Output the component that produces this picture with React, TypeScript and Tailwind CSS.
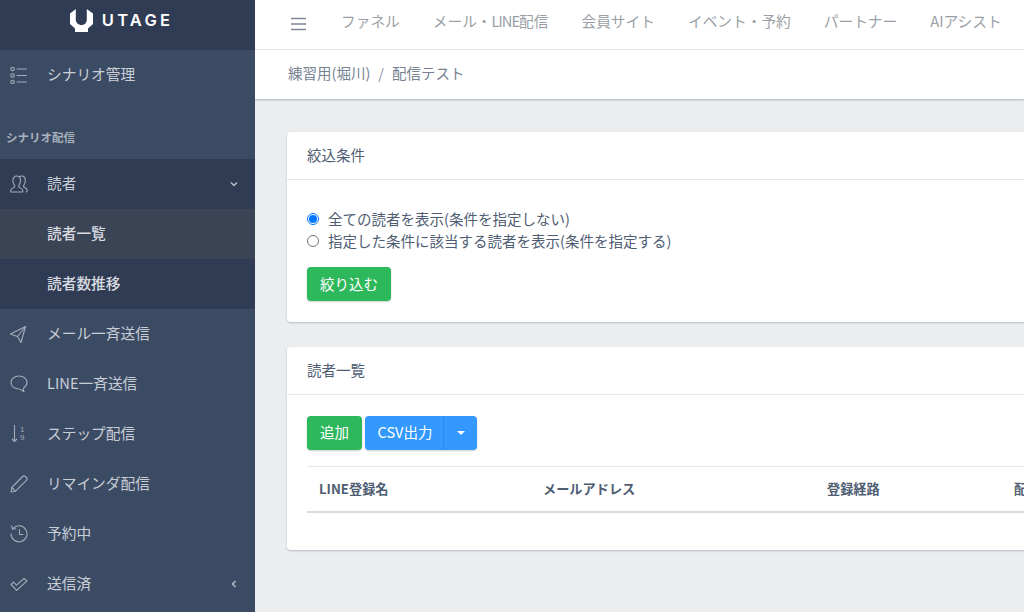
import React from "react";

const stroke = { fill: "none", stroke: "currentColor", strokeWidth: 1.1, strokeLinecap: "round", strokeLinejoin: "round" } as const;

const ListIcon = () => (
  <svg width="17" height="17" viewBox="0 0 17 17" {...stroke}>
    <circle cx="2.500" cy="2" r="1.700" /><circle cx="2.500" cy="8.500" r="1.700" /><circle cx="2.500" cy="15" r="1.700" />
    <path d="M7 2h9.500M7 8.500h9.500M7 15h9.500" />
  </svg>
);
const UsersIcon = () => (
  <svg width="18" height="18" viewBox="0 0 18 18" {...stroke}>
    <path d="M.7 17v-1.800c0-1.600 3.100-2.400 3.900-3.400.3-.6.2-1.200-.2-1.700C3.300 8.800 2.900 7.200 2.900 5.500 2.900 2.900 4.500 1 6.700 1s3.800 1.900 3.800 4.500c0 1.700-.4 3.300-1.500 4.600-.4.500-.5 1.100-.2 1.700.8 1 3.900 1.800 3.900 3.400V17z" />
    <path d="M9.600 1.700C10.200 1.200 10.900 1 11.600 1c2.100 0 3.700 1.900 3.700 4.500 0 1.700-.4 3.300-1.400 4.600-.4.500-.5 1.100-.2 1.700.7.900 3.600 1.700 3.600 3.400 0 .8-.3 1.400-1 1.800" />
  </svg>
);
const PlaneIcon = () => (
  <svg width="17" height="17" viewBox="0 0 17 17" {...stroke}>
    <path d="M15.500 .5 .5 8l7 2.500 3.500 6z" /><path d="M15.500 .5 7.500 10.500" />
  </svg>
);
const BubbleIcon = () => (
  <svg width="18" height="18" viewBox="0 0 18 18" {...stroke}>
    <path d="M9 1C4.500 1 1 3.800 1 7.500s3.500 6.500 8 6.500c1.300 0 2.800 1.400 5 2.700-.6-1.200-.8-2.300-.5-3.500C15.600 11.700 17 9.800 17 7.500 17 3.800 13.500 1 9 1z" />
  </svg>
);
const SortIcon = () => (
  <svg width="18" height="18" viewBox="0 0 18 18">
    <path d="M4.500 0v16.500M2 14l2.500 2.500L7 14" fill="none" stroke="currentColor" strokeWidth="1.100" />
    <text x="10" y="7" fontSize="8" fill="currentColor" fontFamily="'Liberation Sans', sans-serif">1</text>
    <text x="10" y="15" fontSize="8" fill="currentColor" fontFamily="'Liberation Sans', sans-serif">9</text>
  </svg>
);
const PencilIcon = () => (
  <svg width="18" height="18" viewBox="0 0 18 18" {...stroke}>
    <path d="M1 17 1.800 12.500 12.600 1.500c.8-.8 2-.8 2.800 0l1 1c.8.8.8 2 0 2.800L5.500 16.200z" /><path d="m1.800 12.500 3.700 3.700" />
  </svg>
);
const HistoryIcon = () => (
  <svg width="18" height="18" viewBox="0 0 18 18" {...stroke}>
    <path d="M3 3.500A8 8 0 1 1 1 9" /><path d="M1.700 .8 2.500 4.200l3.300-.4" /><path d="M9.500 4.500v5H13" />
  </svg>
);
const CheckIcon = () => (
  <svg width="18" height="18" viewBox="0 0 18 18" {...stroke}>
    <path d="m1 9.500 2.500-2.300 3 3L14 3.500l3 2.300-10.300 9.500z" />
  </svg>
);
const Chevron = ({ down }: { down?: boolean }) => (
  <svg width="8" height="8" viewBox="0 0 8 8" fill="none" stroke="currentColor" strokeWidth="1.500">
    <path d={down ? "M1 2.500 4 5.500l3-3" : "M5.500 1 2.500 4l3 3"} />
  </svg>
);
const Logo = () => (
  <svg width="23" height="23" viewBox="0 0 23 23" fill="#fff">
    <path d="M5.800 0 0 4.500V15l5 4.500V23h13v-3.500l5-4.500V4.500L16.800 0v10.500c0 3.300-2.200 5.500-5.300 5.500s-5.700-2.200-5.700-5.500z" />
  </svg>
);

function NavItem({ icon, label, right }: { icon?: React.ReactNode; label: string; right?: React.ReactNode }) {
  return (
    <div className="flex h-[50px] items-center">
      <span className="ml-[10px] flex w-[37px] shrink-0 items-center text-[#a3acb8]">{icon}</span>
      <span className="grow pb-[1px] text-[14.700px] leading-none text-[#c9ced6]">{label}</span>
      {right && <span className="mr-[17px] text-[#b9bfc8]">{right}</span>}
    </div>
  );
}

function Card({ title, children, className }: { title: string; children: React.ReactNode; className: string }) {
  return (
    <section className={`w-[1000px] rounded-[4px] bg-white shadow-[0_1px_2px_rgba(60,75,100,0.3)] ${className}`}>
      <div className="flex h-[48px] items-center border-b border-[#e4e6ea] pb-[1px] pl-[20px] text-[14.500px] leading-none text-[#4f5d73]">{title}</div>
      {children}
    </section>
  );
}

const nav = ["ファネル", "メール・LINE配信", "会員サイト", "イベント・予約", "パートナー", "AIアシスト"];

export default function App() {
  return (
    <div className="flex h-[612px] w-[1024px] overflow-hidden bg-[#ebedef] font-['Noto_Sans_CJK_JP','Noto_Sans',sans-serif] text-[#4f5d73]">
      <aside className="flex w-[255px] shrink-0 flex-col bg-[#3c4b64]">
        <div className="flex h-[50px] items-center justify-center gap-[9px] bg-[#303c54] pb-[9px] pr-[12px]">
          <Logo />
          <span className="font-['Inter','Noto_Sans',sans-serif] text-[16.500px] font-semibold leading-none tracking-[3.200px] text-white">UTAGE</span>
        </div>
        <NavItem icon={<ListIcon />} label="シナリオ管理" />
        <div className="flex h-[59px] items-end pb-[16px] pl-[6px] text-[11.500px] font-bold leading-none text-[#a9b1bd]">シナリオ配信</div>
        <div className="bg-[#303c54]">
          <NavItem icon={<UsersIcon />} label="読者" right={<Chevron down />} />
          <div className="flex h-[50px] items-center bg-[#3a4454] pb-[1px] pl-[47px] text-[14.700px] font-medium leading-none text-[#d8dbe0]">読者一覧</div>
          <div className="flex h-[50px] items-center pb-[2px] pl-[47px] text-[14.700px] font-medium leading-none text-[#d8dbe0]">読者数推移</div>
        </div>
        <NavItem icon={<PlaneIcon />} label="メール一斉送信" />
        <NavItem icon={<BubbleIcon />} label="LINE一斉送信" />
        <NavItem icon={<SortIcon />} label="ステップ配信" />
        <NavItem icon={<PencilIcon />} label="リマインダ配信" />
        <NavItem icon={<HistoryIcon />} label="予約中" />
        <NavItem icon={<CheckIcon />} label="送信済" right={<Chevron />} />
      </aside>
      <main className="min-w-0 grow overflow-hidden">
        <header className="bg-white shadow-[0_1px_2px_rgba(60,75,100,0.35)]">
          <div className="flex h-[50px] items-center border-b border-[#e4e6ea] pl-[36px]">
            <svg width="15" height="14" viewBox="0 0 15 14" fill="none" stroke="#7f8894" strokeWidth="1.300" className="mb-[1px] mr-[35px] shrink-0">
              <path d="M0 1.500h15M0 7h15M0 12.500h15" />
            </svg>
            <div className="flex gap-[33px] whitespace-nowrap pb-[7px] text-[14.700px] leading-none text-[#9a9fa7]">
              {nav.map((n) =>
                n.includes("LINE") ? (
                  <span key={n}>メール・<span className="tracking-[-1px]">LINE</span>配信</span>
                ) : (
                  <span key={n}>{n}</span>
                )
              )}
            </div>
          </div>
          <div className="flex h-[49px] items-center gap-[8px] pb-[2px] pl-[33px] text-[14.500px] leading-none text-[#768192]">
            <span>練習用(堀川)</span><span className="text-[#8a93a2]">/</span><span>配信テスト</span>
          </div>
        </header>
        <div className="pl-[32px] pt-[33px]">
          <Card title="絞込条件" className="h-[190px]">
            <div className="pl-[20px] pt-[28px]">
              <label className="flex h-[22px] items-center gap-[9px] text-[14.500px] leading-none">
                <span className="flex h-[12px] w-[12px] items-center justify-center rounded-full border border-[#0075ff] bg-white"><span className="h-[8px] w-[8px] rounded-full bg-[#0075ff]" /></span>
                全ての読者を表示(条件を指定しない)
              </label>
              <label className="flex h-[22px] items-center gap-[9px] text-[14.500px] leading-none">
                <span className="h-[12px] w-[12px] rounded-full border border-[#767676] bg-white" />
                指定した条件に該当する読者を表示(条件を指定する)
              </label>
              <button className="mt-[15px] flex h-[34px] w-[84px] items-center justify-center rounded-[4px] bg-[#2eb85c] text-[14.500px] leading-none text-white shadow-[0_1px_2px_rgba(0,0,0,0.2)]">絞り込む</button>
            </div>
          </Card>
          <Card title="読者一覧" className="mt-[25px] h-[203px]">
            <div className="px-[20px] pt-[21px]">
              <div className="flex gap-[3px]">
                <button className="flex h-[34px] w-[55px] items-center justify-center rounded-[4px] bg-[#2eb85c] pb-[1px] text-[14.500px] leading-none text-white shadow-[0_1px_2px_rgba(0,0,0,0.2)]">追加</button>
                <div className="flex h-[34px] rounded-[4px] bg-[#3399ff] text-white shadow-[0_1px_2px_rgba(0,0,0,0.2)]">
                  <span className="flex w-[79px] items-center justify-center border-r border-[#2d8cec] pb-[1px] pl-[2px] text-[14.500px] leading-none">CSV出力</span>
                  <span className="flex w-[33px] items-center justify-center">
                    <span className="h-0 w-0 border-x-[4.500px] border-t-[4.500px] border-x-transparent border-t-white" />
                  </span>
                </div>
              </div>
              <div className="mt-[16px] flex h-[47px] items-center border-y border-t-[#e4e6ea] border-b-[#d8dbe0] border-b-2 pb-[1px] pl-[12px] text-[13.200px] font-bold leading-none text-[#4f5d73]">
                <span className="w-[224px]">LINE登録名</span>
                <span className="w-[284px]">メールアドレス</span>
                <span className="w-[187px]">登録経路</span>
                <span>配信</span>
              </div>
            </div>
          </Card>
        </div>
      </main>
    </div>
  );
}
